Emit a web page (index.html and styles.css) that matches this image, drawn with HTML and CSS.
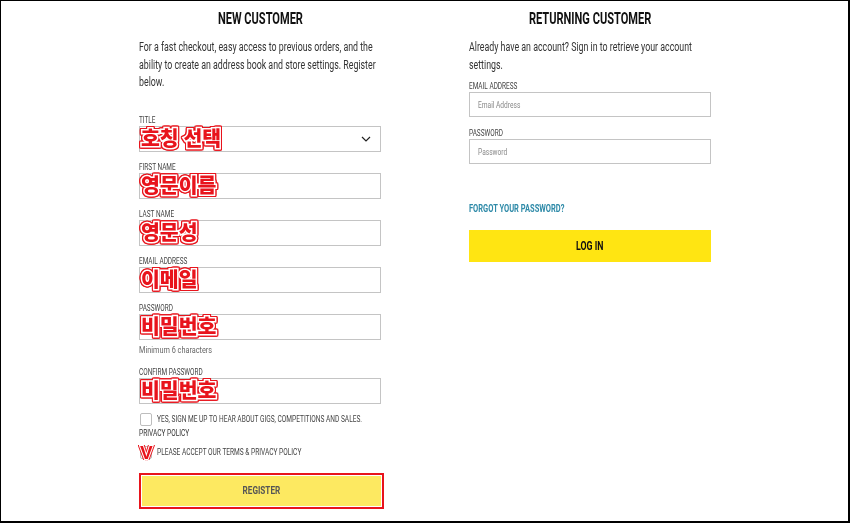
FILE: index.html
```html
<!DOCTYPE html>
<html>
<head>
<meta charset="utf-8">
<link rel="stylesheet" href="styles.css">
</head>
<body>
<div class="frame">
  <section class="col">
    <h2 class="heading"><span class="sq mid">NEW CUSTOMER</span></h2>
    <p class="intro"><span class="sq">For a fast checkout, easy access to previous orders, and the</span><br><span class="sq">ability to create an address book and store settings. Register</span><br><span class="sq">below.</span></p>
    <div class="fields">
      <div class="field">
        <label class="label"><span class="sq">TITLE</span></label>
        <div class="input select">
          <svg class="chev" width="10" height="6" viewBox="0 0 10 6"><path d="M1 1 L5 5 L9 1" fill="none" stroke="#222" stroke-width="1.2"/></svg>
          <span class="note">호칭 선택</span>
        </div>
      </div>
      <div class="field">
        <label class="label"><span class="sq">FIRST NAME</span></label>
        <div class="input"><span class="note">영문이름</span></div>
      </div>
      <div class="field">
        <label class="label"><span class="sq">LAST NAME</span></label>
        <div class="input"><span class="note">영문성</span></div>
      </div>
      <div class="field">
        <label class="label"><span class="sq">EMAIL ADDRESS</span></label>
        <div class="input"><span class="note">이메일</span></div>
      </div>
      <div class="field">
        <label class="label"><span class="sq">PASSWORD</span></label>
        <div class="input"><span class="note">비밀번호</span></div>
        <div class="hint"><span class="sq">Minimum 6 characters</span></div>
      </div>
      <div class="field">
        <label class="label"><span class="sq">CONFIRM PASSWORD</span></label>
        <div class="input"><span class="note">비밀번호</span></div>
      </div>
    </div>
    <div class="check-row first">
      <span class="box"></span>
      <span class="check-text"><span class="sq">YES, SIGN ME UP TO HEAR ABOUT GIGS, COMPETITIONS AND SALES.</span></span>
    </div>
    <div class="policy"><span class="sq">PRIVACY POLICY</span></div>
    <div class="check-row">
      <span class="box"><span class="vmark">V</span></span>
      <span class="check-text"><span class="sq">PLEASE ACCEPT OUR TERMS &amp; PRIVACY POLICY</span></span>
    </div>
    <div class="register-wrap"><button class="register"><span class="sq mid">REGISTER</span></button></div>
  </section>
  <section class="col">
    <h2 class="heading"><span class="sq mid">RETURNING CUSTOMER</span></h2>
    <p class="intro"><span class="sq">Already have an account? Sign in to retrieve your account</span><br><span class="sq">settings.</span></p>
    <div class="rfields">
      <div class="rfield">
        <label class="label"><span class="sq">EMAIL ADDRESS</span></label>
        <div class="input rinput"><span class="ph"><span class="sq">Email Address</span></span></div>
      </div>
      <div class="rfield">
        <label class="label"><span class="sq">PASSWORD</span></label>
        <div class="input rinput"><span class="ph"><span class="sq">Password</span></span></div>
      </div>
    </div>
    <a class="forgot"><span class="sq">FORGOT YOUR PASSWORD?</span></a>
    <button class="login"><span class="sq mid">LOG IN</span></button>
  </section>
</div>
</body>
</html>
```
FILE: styles.css
```css
* { box-sizing: border-box; }
html, body { margin: 0; padding: 0; background: #fff; }
body {
  font-family: Roboto, "Liberation Sans", sans-serif;
  color: #2a2a2a;
}
.sq {
  display: inline-block;
  white-space: nowrap;
  transform: scaleX(var(--sx, 0.73));
  transform-origin: 0 50%;
}
.sq.mid { transform-origin: 50% 50%; }
.frame {
  width: 850px;
  height: 523px;
  border-style: solid;
  border-color: #000;
  border-width: 1px 2px 2px 1px;
  display: flex;
  justify-content: center;
  gap: 88px;
  padding-top: 7px;
  padding-left: 1px;
  overflow: hidden;
}
.col {
  width: 242px;
  display: flex;
  flex-direction: column;
}
.heading {
  margin: 0;
  font-size: 17px;
  line-height: 20px;
  font-weight: 700;
  text-align: center;
  color: #111;
  --sx: 0.65;
}
.intro {
  margin: 11px 0 0;
  font-size: 12px;
  line-height: 17.5px;
  color: #333;
  --sx: 0.735;
}
.fields { margin-top: 22px; display: flex; flex-direction: column; gap: 9px; }
.field { display: flex; flex-direction: column; }
.label {
  font-size: 8.5px;
  line-height: 12px;
  color: #444;
  text-transform: uppercase;
  --sx: 0.76;
}
.input {
  position: relative;
  height: 26px;
  border: 1px solid #c4c4c4;
  background: #fff;
  display: flex;
  align-items: center;
  padding: 0 8px;
}
.select { justify-content: flex-end; }
.chev { margin-right: 1px; }
.note {
  position: absolute;
  left: 1px;
  top: 1px;
  font-family: "Noto Sans CJK KR", sans-serif;
  font-weight: 900;
  font-size: 20.5px;
  line-height: 18px;
  color: #e8141c;
  -webkit-text-stroke: 3px #fff;
  paint-order: stroke fill;
  filter: drop-shadow(1px 0 0 #e8141c) drop-shadow(-1px 0 0 #e8141c) drop-shadow(0 1px 0 #e8141c) drop-shadow(0 -1px 0 #e8141c);
}
.hint {
  margin-top: 4px;
  font-size: 9.5px;
  line-height: 12px;
  color: #666;
  margin-bottom: 1px;
  --sx: 0.77;
}
.check-row {
  display: flex;
  align-items: center;
  gap: 5px;
  margin-top: 7px;
}
.check-row.first { margin-top: 9px; }
.box {
  position: relative;
  width: 12px;
  height: 13px;
  border: 1px solid #bdbdbd;
  border-radius: 2px;
  margin-left: 1px;
  flex: none;
}
.vmark {
  position: absolute;
  left: -1px;
  top: -3px;
  font-family: "Liberation Sans", sans-serif;
  font-weight: bold;
  font-size: 19px;
  line-height: 18px;
  color: #e8141c;
  -webkit-text-stroke: 2px #fff;
  paint-order: stroke fill;
  filter: drop-shadow(1px 0 0 #e8141c) drop-shadow(-1px 0 0 #e8141c);
}
.check-text {
  font-size: 9px;
  line-height: 12px;
  color: #444;
  --sx: 0.73;
}
.policy {
  font-size: 9px;
  line-height: 12px;
  color: #333;
  margin-top: 1px;
  --sx: 0.73;
}
.register-wrap {
  margin-top: 14px;
  width: 245px;
  height: 36px;
  border: 2px solid #e8141c;
  padding: 1px;
  background: #fff;
}
.register {
  display: block;
  width: 100%;
  height: 100%;
  border: 0;
  background: #fde961;
  font-family: inherit;
  font-weight: 700;
  font-size: 11px;
  color: #555;
  padding: 0;
  --sx: 0.74;
}
.rfields { margin-top: 6px; display: flex; flex-direction: column; gap: 10px; }
.rfield { display: flex; flex-direction: column; }
.rinput { height: 25px; padding: 0 8px; }
.ph { font-size: 9px; color: #888; --sx: 0.735; }
.forgot {
  margin-top: 39px;
  font-size: 10px;
  line-height: 12px;
  font-weight: 700;
  color: #2e8aa8;
  --sx: 0.75;
}
.login {
  margin-top: 15px;
  height: 32px;
  border: 0;
  background: #ffe512;
  font-family: inherit;
  font-weight: 700;
  font-size: 12px;
  color: #111;
  padding: 0;
  --sx: 0.73;
}
```
